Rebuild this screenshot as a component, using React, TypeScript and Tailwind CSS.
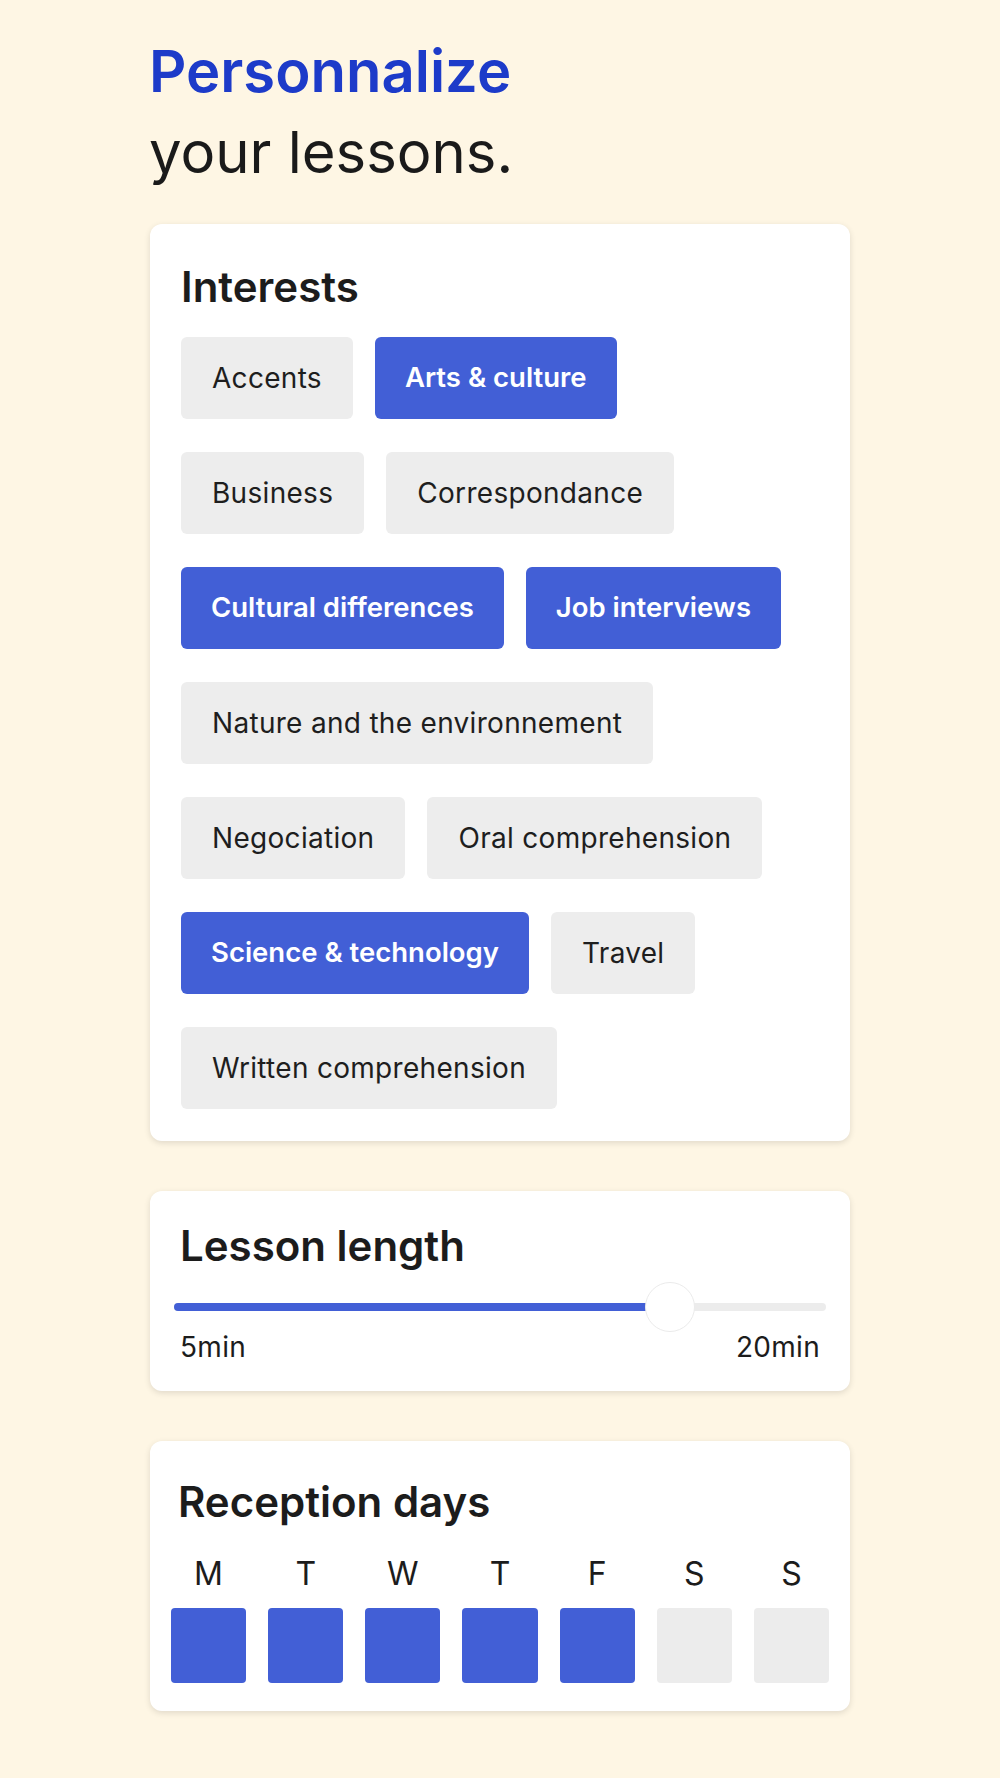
import { useState } from "react";

const interestRows = [
  [
    { label: "Accents", on: false },
    { label: "Arts & culture", on: true },
  ],
  [
    { label: "Business", on: false },
    { label: "Correspondance", on: false },
  ],
  [
    { label: "Cultural differences", on: true },
    { label: "Job interviews", on: true },
  ],
  [{ label: "Nature and the environnement", on: false }],
  [
    { label: "Negociation", on: false },
    { label: "Oral comprehension", on: false },
  ],
  [
    { label: "Science & technology", on: true },
    { label: "Travel", on: false },
  ],
  [{ label: "Written comprehension", on: false }],
];

const days = [
  { d: "M", on: true },
  { d: "T", on: true },
  { d: "W", on: true },
  { d: "T", on: true },
  { d: "F", on: true },
  { d: "S", on: false },
  { d: "S", on: false },
];

export default function App() {
  const [length] = useState(76);

  return (
    <div className="min-h-[1778px] bg-[#fef6e4] font-['Inter','Noto_Sans',sans-serif] text-[#1c1c1c]">
      <div className="w-[700px] mx-auto pt-[31px]">
        <h1 className="text-[58px] leading-[81px] mb-[31px] -ml-[1px]">
          <span className="block font-semibold text-[#1d3bc9]">Personnalize</span>
          <span className="block font-normal text-[#1a1a1a]">your lessons.</span>
        </h1>

        {/* Interests */}
        <section className="bg-white rounded-xl shadow-[0_2px_6px_rgba(0,0,0,0.12)] px-[31px] pt-[38px] pb-[32px]">
          <h2 className="text-[42px] leading-[50px] font-semibold mb-[25px]">Interests</h2>
          <div className="flex flex-col gap-y-[33px]">
            {interestRows.map((row, r) => (
              <div key={r} className="flex gap-x-[22px]">
                {row.map((item) => (
                  <span
                    key={item.label}
                    className={
                      item.on
                        ? "h-[82px] px-[30px] flex items-center rounded-md bg-[#425fd6] text-white text-[27.5px] font-semibold"
                        : "h-[82px] px-[31px] flex items-center rounded-md bg-[#ededed] text-[#1e1e1e] text-[28px] tracking-[0.3px]"
                    }
                  >
                    {item.label}
                  </span>
                ))}
              </div>
            ))}
          </div>
        </section>

        {/* Lesson length */}
        <section className="mt-[50px] bg-white rounded-xl shadow-[0_2px_6px_rgba(0,0,0,0.12)] px-[24px] pt-[30px] pb-[27px]">
          <h2 className="text-[42px] leading-[50px] font-semibold pl-[6px]">Lesson length</h2>
          <div className="relative mt-[24px] h-[24px] flex items-center">
            <div className="w-full h-[8px] rounded-full bg-[#ececec]">
              <div className="h-full rounded-full bg-[#425fd6]" style={{ width: `${length}%` }} />
            </div>
            <div
              className="absolute top-1/2 w-[50px] h-[50px] -translate-x-1/2 -translate-y-1/2 rounded-full bg-white border border-[#ebebeb]"
              style={{ left: `${length}%` }}
            />
          </div>
          <div className="mt-[11px] flex justify-between px-[6px] text-[28px] tracking-[0.3px] leading-[34px]">
            <span>5min</span>
            <span>20min</span>
          </div>
        </section>

        {/* Reception days */}
        <section className="mt-[50px] bg-white rounded-xl shadow-[0_2px_6px_rgba(0,0,0,0.12)] px-[21px] pt-[36px] pb-[28px]">
          <h2 className="text-[42px] leading-[50px] font-semibold pl-[7px]">Reception days</h2>
          <div className="mt-[27px] grid grid-cols-7 gap-x-[22px]">
            {days.map((day, i) => (
              <div key={i} className="flex flex-col items-center">
                <span className="text-[32px] leading-[40px]">{day.d}</span>
                <div
                  className={
                    day.on
                      ? "mt-[14px] w-full h-[75px] rounded-[4px] bg-[#425fd6]"
                      : "mt-[14px] w-full h-[75px] rounded-[4px] bg-[#ececec]"
                  }
                />
              </div>
            ))}
          </div>
        </section>
      </div>
    </div>
  );
}
